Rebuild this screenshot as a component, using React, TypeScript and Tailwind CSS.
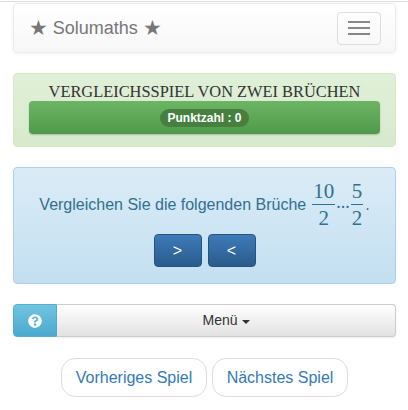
import { FaQuestionCircle } from "react-icons/fa";

function Fraction({ top, bottom }: { top: string; bottom: string }) {
  return (
    <span className="inline-flex flex-col items-center font-['Liberation_Serif',serif] text-[21px] text-[#31708f]">
      <span className="leading-[24px] px-[1px]">{top}</span>
      <span className="h-[1px] w-full bg-[#31708f] my-[1px]" />
      <span className="leading-[24px] px-[1px]">{bottom}</span>
    </span>
  );
}

export default function App() {
  return (
    <div className="w-[408px] h-[410px] bg-white font-['Liberation_Sans',Arial,sans-serif] overflow-hidden">
      <div className="h-[2px] border-b border-[#dcdcdc]" />

      <div className="pl-[13px] pr-[12px]">
        {/* navbar */}
        <nav className="mt-[1px] h-[50px] rounded-[4px] border border-[#ebebeb] bg-gradient-to-b from-white to-[#f7f7f7] shadow-[0_1px_4px_rgba(0,0,0,0.06)] flex items-center justify-between pl-[15px] pr-[14px]">
          <span className="text-[18px] leading-[20px] text-[#777] flex items-center">
            <span className="font-['DejaVu_Sans',sans-serif] text-[21px] mr-[5px]">★</span>
            Solumaths
            <span className="font-['DejaVu_Sans',sans-serif] text-[21px] ml-[5px]">★</span>
          </span>
          <button className="w-[44px] h-[33px] rounded-[4px] border border-[#dddddd] flex flex-col items-center justify-center gap-[4px]">
            <span className="block w-[22px] h-[2px] bg-[#888]" />
            <span className="block w-[22px] h-[2px] bg-[#888]" />
            <span className="block w-[22px] h-[2px] bg-[#888]" />
          </button>
        </nav>

        {/* score panel */}
        <div className="mt-[20px] rounded-[4px] border border-[#d6e9c6] bg-gradient-to-b from-[#dff0d8] to-[#d8eacd] pt-[9px] pb-[12px] px-[15px]">
          <h1 className="text-center font-['Liberation_Serif',serif] text-[16.4px] leading-[18px] text-[#333]">
            VERGLEICHSSPIEL VON ZWEI BRÜCHEN
          </h1>
          <div className="h-[33px] rounded-[4px] bg-gradient-to-b from-[#6cb565] to-[#4f9a4a] shadow-[0_1px_2px_rgba(0,0,0,0.2)] flex items-center justify-center">
            <span className="rounded-[10px] bg-[#467f40] px-[7px] h-[18px] flex items-center text-[12px] font-bold text-white">
              Punktzahl : 0
            </span>
          </div>
        </div>

        {/* question panel */}
        <div className="mt-[20px] rounded-[4px] border border-[#a9d3ec] bg-gradient-to-b from-[#dbecf7] to-[#c3dff0] pt-[11px] pb-[16px]">
          <div className="flex items-center justify-center text-[16px] text-[#31708f]">
            <span className="mr-[6px]">Vergleichen Sie die folgenden Brüche</span>
            <Fraction top="10" bottom="2" />
            <span className="font-['Liberation_Serif',serif] text-[18px] mx-[1px] translate-y-[-2px]">...</span>
            <Fraction top="5" bottom="2" />
            <span className="ml-[2px]">.</span>
          </div>
          <div className="mt-[4px] flex justify-center gap-[6px]">
            <button className="w-[48px] h-[33px] rounded-[4px] border border-[#245580] bg-gradient-to-b from-[#3e7bb8] to-[#2a5b8c] text-white text-[16px]">
              &gt;
            </button>
            <button className="w-[48px] h-[33px] rounded-[4px] border border-[#245580] bg-gradient-to-b from-[#3e7bb8] to-[#2a5b8c] text-white text-[16px]">
              &lt;
            </button>
          </div>
        </div>

        {/* menu row */}
        <div className="mt-[20px] flex h-[33px]">
          <button className="w-[44px] rounded-l-[4px] border border-[#4fb0d0] bg-gradient-to-b from-[#72c4e0] to-[#4aa9cf] flex items-center justify-center">
            <FaQuestionCircle className="text-white w-[14px] h-[14px]" />
          </button>
          <button className="flex-1 rounded-r-[4px] border border-l-0 border-[#cccccc] bg-gradient-to-b from-white to-[#e2e2e2] flex items-center justify-center text-[14px] text-[#333] shadow-[0_1px_2px_rgba(0,0,0,0.08)]">
            Menü
            <span className="ml-[4px] mt-[2px] w-0 h-0 border-x-[4px] border-x-transparent border-t-[4px] border-t-[#333]" />
          </button>
        </div>

        {/* navigation */}
        <div className="mt-[21px] flex justify-center gap-[5px]">
          <button className="h-[39px] w-[146px] rounded-[14px] border border-[#dddddd] bg-white text-[16px] text-[#337ab7]">
            Vorheriges Spiel
          </button>
          <button className="h-[39px] w-[136px] rounded-[14px] border border-[#dddddd] bg-white text-[16px] text-[#337ab7]">
            Nächstes Spiel
          </button>
        </div>
      </div>
    </div>
  );
}
